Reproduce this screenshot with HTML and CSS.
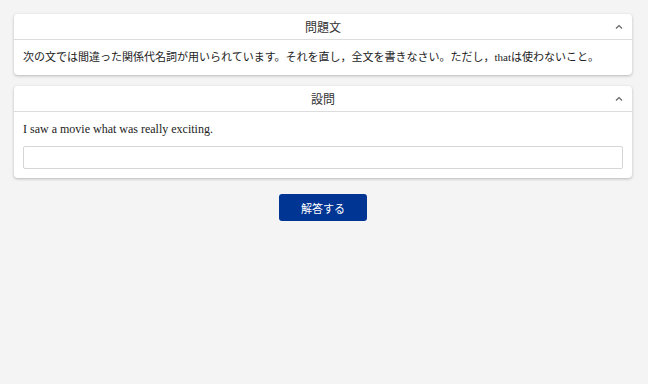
FILE: index.html
```html
<!DOCTYPE html>
<html lang="ja">
<head>
  <meta charset="UTF-8" />
  <title>問題</title>
  <link rel="stylesheet" href="styles.css">
</head>
<body>

  <div class="panel">
    <div class="panel-head">
      <span class="panel-title">問題文</span>
      <svg class="chevron" width="8" height="6" viewBox="0 0 8 6"><path d="M1 4.5 L4 1.5 L7 4.5" fill="none" stroke="#666" stroke-width="1.2"/></svg>
    </div>
    <div class="panel-body">
      <p class="jp">次の文では間違った関係代名詞が用いられています。それを直し，全文を書きなさい。ただし，thatは使わないこと。</p>
    </div>
  </div>

  <div class="panel">
    <div class="panel-head">
      <span class="panel-title">設問</span>
      <svg class="chevron" width="8" height="6" viewBox="0 0 8 6"><path d="M1 4.5 L4 1.5 L7 4.5" fill="none" stroke="#666" stroke-width="1.2"/></svg>
    </div>
    <div class="panel-body">
      <p class="en">I saw a movie what was really exciting.</p>
      <input type="text" class="answer" />
    </div>
  </div>

  <div class="actions">
    <button class="submit">解答する</button>
  </div>

</body>
</html>
```

FILE: styles.css
```css
body {
  margin: 0;
  padding: 14px 16px 14px 14px;
  background-color: #f4f4f4;
  font-family: "Liberation Serif", "Noto Sans CJK JP", serif;
  color: #222;
}
.panel {
  background-color: white;
  border-radius: 4px;
  box-shadow: 0 1px 3px rgba(0, 0, 0, 0.25);
  margin-bottom: 11px;
}
.panel-head {
  position: relative;
  height: 25px;
  display: flex;
  align-items: center;
  justify-content: center;
  border-bottom: 1px solid #dcdcdc;
}
.panel-title { font-size: 12px; color: #333; }
.chevron { position: absolute; right: 9px; top: 10px; }
.panel-body { padding: 8px 9px 9px; }
.panel-body p { margin: 0; }
.jp { font-size: 11px; line-height: 18px; }
.en { font-size: 12px; line-height: 18px; margin-bottom: 8px !important; }
.answer {
  display: block;
  box-sizing: border-box;
  width: 100%;
  height: 23px;
  border: 1px solid #d6d6d6;
  border-radius: 2px;
  font-size: 12px;
}
.actions {
  display: flex;
  justify-content: center;
  margin-top: 16px;
}
.submit {
  width: 88px;
  height: 27px;
  background-color: #003594;
  color: white;
  border: none;
  border-radius: 3px;
  font-family: "Noto Sans CJK JP", sans-serif;
  font-size: 11px;
  cursor: pointer;
}
```
